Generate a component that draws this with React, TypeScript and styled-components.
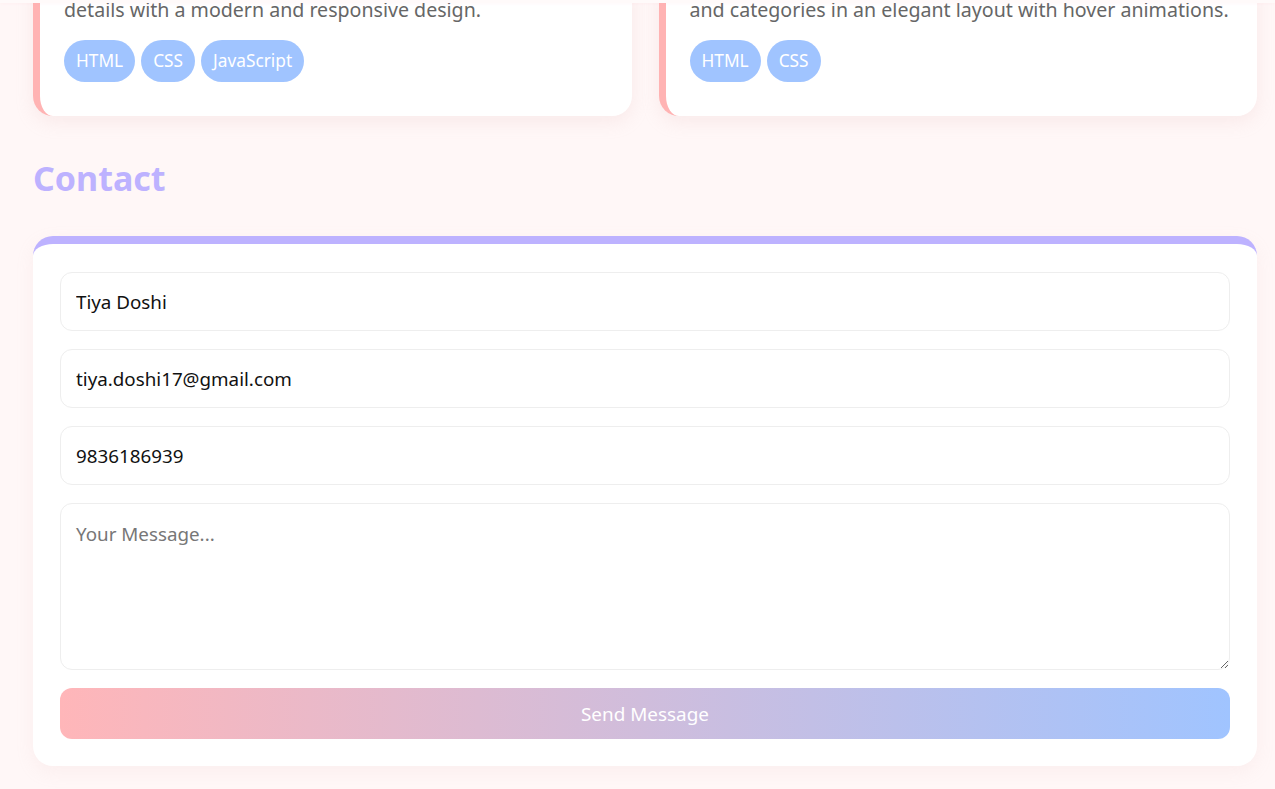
import React from "react";
import styled, { createGlobalStyle } from "styled-components";

const Global = createGlobalStyle`
  html, body { margin: 0; padding: 0; background: #fff7f7; }
  body { font-family: "Noto Sans", "Open Sans", sans-serif; overflow: hidden; }
  * { box-sizing: border-box; }
`;

const HeaderEdge = styled.div`
  position: fixed;
  top: 0;
  left: 0;
  right: 0;
  height: 3px;
  background: #fffafa;
  box-shadow: 0 1px 3px rgba(255, 182, 185, 0.08);
  z-index: 10;
`;

const Page = styled.main`
  padding: 0 18px 23px 33px;
`;

const ProjectGrid = styled.div`
  display: grid;
  grid-template-columns: 1fr 1fr;
  gap: 27px;
  margin-top: -30px;
`;

const ProjectCard = styled.div`
  background: #fff;
  border-left: 7px solid #ffb3b3;
  border-radius: 20px;
  padding: 26px 24px 34px;
  box-shadow: 0 6px 18px rgba(220, 180, 180, 0.18);
`;

const ProjectText = styled.p`
  margin: 0 0 16px;
  font-size: 19.6px;
  line-height: 28px;
  color: #666;
  white-space: nowrap;
`;

const Tags = styled.div`
  display: flex;
  gap: 6px;
`;

const Tag = styled.span`
  background: #a0c4ff;
  color: #fff;
  font-size: 17.3px;
  line-height: 22px;
  padding: 10px 12px;
  border-radius: 21px;
`;

const Heading = styled.h2`
  margin: 41px 0 36px;
  font-size: 34px;
  line-height: 43px;
  font-weight: 700;
  color: #bdb2ff;
`;

const ContactCard = styled.form`
  background: #fff;
  border-top: 8px solid #bdb2ff;
  border-radius: 20px;
  padding: 28px 27px 27px;
  display: flex;
  flex-direction: column;
  gap: 18px;
  box-shadow: 0 6px 18px rgba(220, 180, 180, 0.12);
`;

const Field = styled.input`
  width: 100%;
  height: 59px;
  border: 1px solid #eee;
  border-radius: 12px;
  padding: 0 15px;
  font-family: inherit;
  font-size: 18.8px;
  color: #111;
  background: #fff;
  outline: none;
`;

const Message = styled.textarea`
  width: 100%;
  height: 167px;
  border: 1px solid #eee;
  border-radius: 12px;
  padding: 18px 15px 14px;
  font-family: inherit;
  font-size: 18.8px;
  line-height: 25px;
  color: #111;
  background: #fff;
  outline: none;
  resize: vertical;
  display: block;
  &::placeholder { color: #777; }
`;

const SendButton = styled.button`
  height: 51px;
  border: none;
  border-radius: 12px;
  background: linear-gradient(90deg, #ffb6b9 0%, #a0c4ff 100%);
  color: #fff;
  font-family: inherit;
  font-size: 18.9px;
  cursor: pointer;
`;

export default function App() {
  return (
    <>
      <Global />
      <HeaderEdge />
      <Page>
        <ProjectGrid>
          <ProjectCard>
            <ProjectText>details with a modern and responsive design.</ProjectText>
            <Tags>
              <Tag>HTML</Tag>
              <Tag>CSS</Tag>
              <Tag>JavaScript</Tag>
            </Tags>
          </ProjectCard>
          <ProjectCard>
            <ProjectText>and categories in an elegant layout with hover animations.</ProjectText>
            <Tags>
              <Tag>HTML</Tag>
              <Tag>CSS</Tag>
            </Tags>
          </ProjectCard>
        </ProjectGrid>
        <Heading>Contact</Heading>
        <ContactCard onSubmit={(e) => e.preventDefault()}>
          <Field type="text" defaultValue="Tiya Doshi" />
          <Field type="email" defaultValue="tiya.doshi17@gmail.com" />
          <Field type="tel" defaultValue="9836186939" />
          <Message placeholder="Your Message..." />
          <SendButton type="submit">Send Message</SendButton>
        </ContactCard>
      </Page>
    </>
  );
}
